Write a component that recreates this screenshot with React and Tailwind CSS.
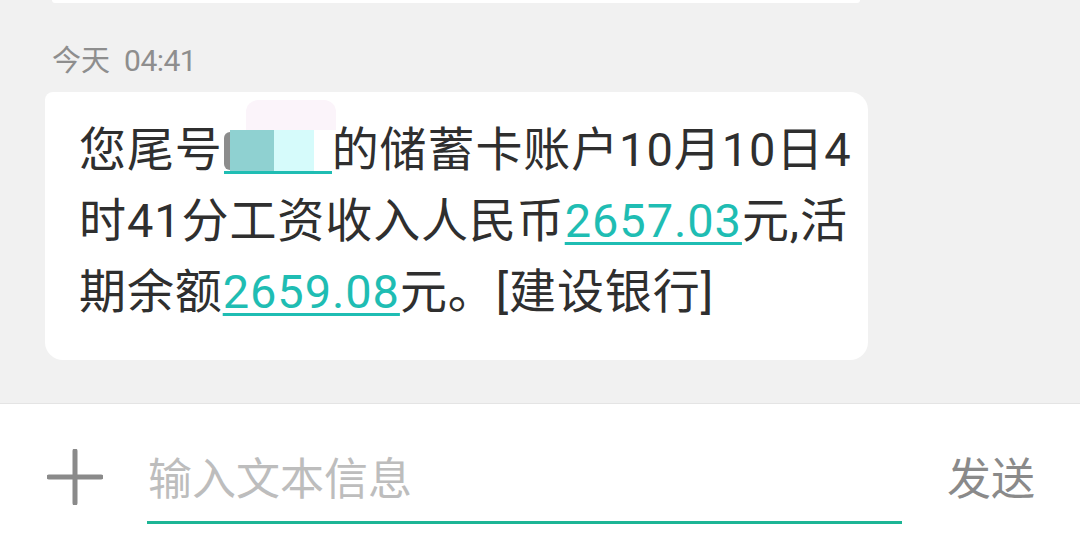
import React from 'react';

const font = { fontFamily: 'Roboto, "Noto Sans CJK SC", sans-serif' };

const Amount = ({ children }) => (
  <span className="text-[#1fbdb3] underline decoration-[3px] underline-offset-[5px]">{children}</span>
);

const App = () => {
  return (
    <div className="w-[1080px] h-[548px] flex flex-col overflow-hidden" style={font}>
      {/* chat area */}
      <div className="flex-1 bg-[#f1f1f1] flex flex-col">
        <div className="h-[3px] ml-[52px] mr-[220px] bg-white rounded-b-[6px]" />

        <div className="pl-[52px] pt-[41px] h-[89px] text-[29px] leading-[34px] text-[#8e8e8e] flex items-baseline">
          <span>今天</span>
          <span className="ml-[14px] text-[30px] tracking-[-0.5px]">04:41</span>
        </div>

        <div className="ml-[45px] w-[823px] bg-white rounded-[18px] rounded-tl-[8px] pl-[34px] pt-[22px] pb-[33px] text-[47px] leading-[71px] tracking-[0.9px] text-[#2f2f2f]">
          <div className="flex items-center whitespace-nowrap">
            <span>您尾号</span>
            <span className="relative inline-block w-[108px] h-[52px] ml-[1px]">
              <span className="absolute left-0 top-[8px] w-[12px] h-[38px] bg-[#6f6f6f] rounded-l-[6px] opacity-80" />
              <span className="absolute left-[6px] top-[6px] w-[44px] h-[42px] bg-[#8fd1d1]" />
              <span className="absolute left-[50px] top-[6px] w-[40px] h-[42px] bg-[#d6fbfb]" />
              <span className="absolute left-[22px] top-[-24px] w-[90px] h-[30px] bg-[#fbf4fa] rounded-t-[12px]" />
              <span className="absolute left-0 bottom-[2px] w-[108px] h-[3px] bg-[#1fbdb3]" />
            </span>
            <span>的储蓄卡账户10月10日4</span>
          </div>
          <div className="whitespace-nowrap">
            时41分工资收入人民币<Amount>2657.03</Amount>元,活
          </div>
          <div className="whitespace-nowrap">
            期余额<Amount>2659.08</Amount>元。[建设银行]
          </div>
        </div>
      </div>

      {/* input bar */}
      <div className="h-[145px] bg-white border-t border-[#e4e4e4] flex items-start">
        <div className="w-[147px] pl-[47px] pt-[45px]">
          <svg width="56" height="56" viewBox="0 0 56 56">
            <path d="M28 2v52M2 28h52" stroke="#8a8a8a" strokeWidth="5" strokeLinecap="round" fill="none" />
          </svg>
        </div>
        <div className="w-[755px] pt-[47px]">
          <div className="h-[58px] pl-[1px] text-[44px] leading-[58px] text-[#bdbdbd]">输入文本信息</div>
          <div className="mt-[12px] h-[3px] bg-[#1db595]" />
        </div>
        <div className="flex-1 pt-[47px] pl-[45px] text-[44px] leading-[58px] text-[#8a8a8a]">发送</div>
      </div>
    </div>
  );
};

export default App;
